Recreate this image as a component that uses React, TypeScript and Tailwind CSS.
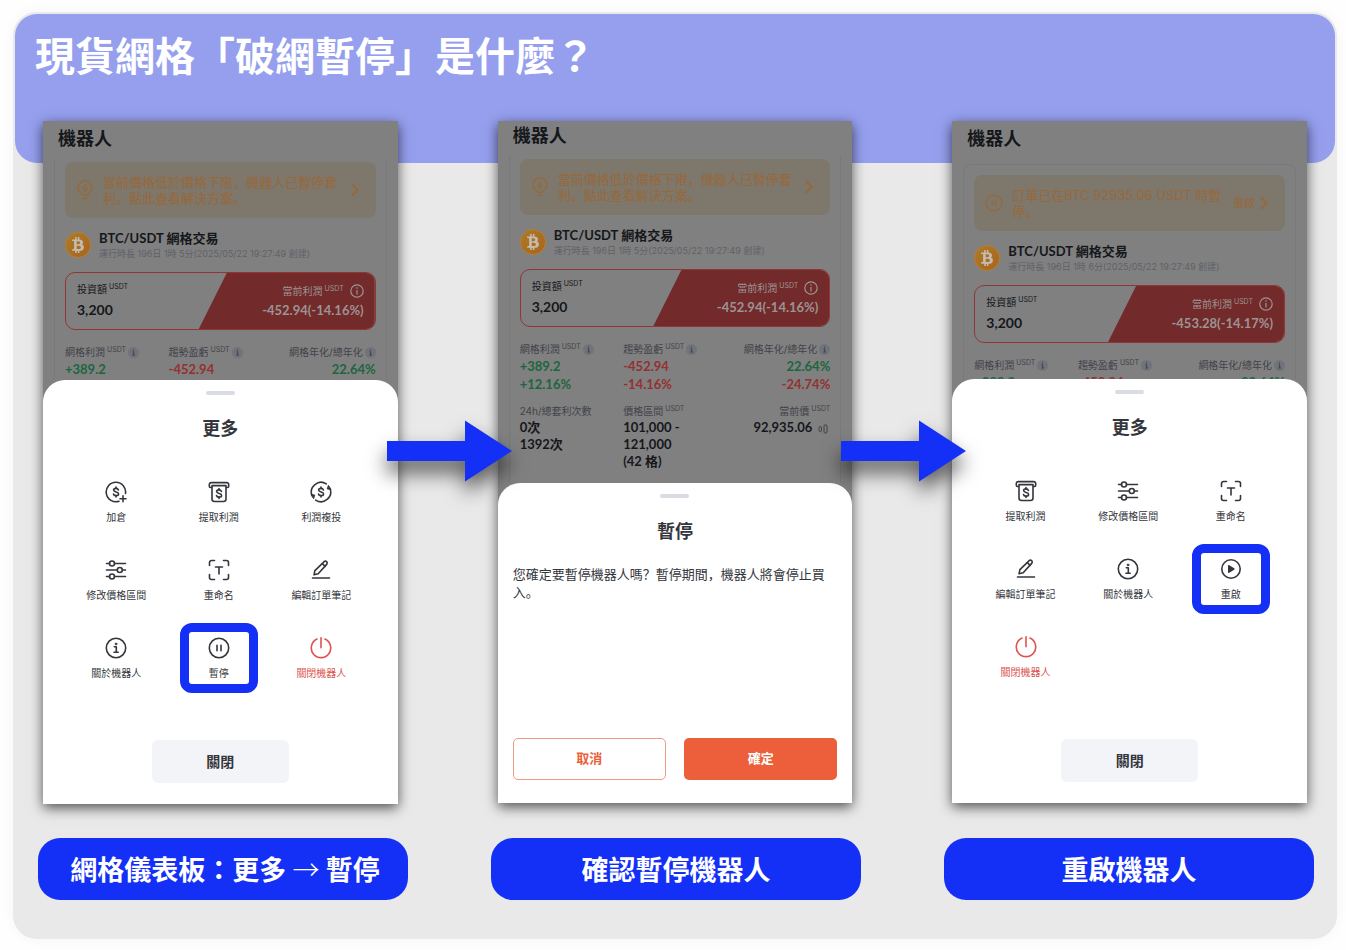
import React from 'react';
import { ChevronRight } from 'lucide-react';
import { FaBtc } from 'react-icons/fa';

type IconName =
  | 'add'
  | 'withdraw'
  | 'reinvest'
  | 'sliders'
  | 'rename'
  | 'edit'
  | 'info'
  | 'pause'
  | 'play'
  | 'power';

interface MenuItem {
  icon: IconName;
  label: string;
  danger?: boolean;
  highlighted?: boolean;
}

interface StatColumn {
  label: string;
  unit?: string;
  values: string[];
}

const dollar = (
  <>
    <path d="M13.4 8.9c-.3-.9-1.2-1.5-2.4-1.5-1.400 0-2.400.7-2.400 1.700 0 2.500 5 1.200 5 3.800 0 1-1.100 1.700-2.600 1.700-1.300 0-2.300-.6-2.500-1.600" />
    <path d="M11 6v1.400M11 14.600V16" />
  </>
);

const iconPaths: Record<IconName, React.ReactNode> = {
  add: (
    <>
      <path d="M20.500 12.500a9.700 9.700 0 1 0-6.500 7.700" />
      {dollar}
      <path d="M18 14.800v6M15 17.800h6" />
    </>
  ),
  withdraw: (
    <>
      <path d="M3.500 6.500H2.500A1.200 1.200 0 0 1 1.300 5.300V3.600A2 2 0 0 1 3.300 1.600h15.400a2 2 0 0 1 2 2v1.700a1.200 1.200 0 0 1-1.200 1.200h-1" />
      <path d="M4 4.600h14v13.400a2.500 2.500 0 0 1-2.500 2.500h-9A2.500 2.500 0 0 1 4 18z" />
      <g transform="translate(0 1.500)">{dollar}</g>
    </>
  ),
  reinvest: (
    <>
      <path d="M16.300 2.900A9.700 9.700 0 0 0 2 14.500M5.700 19.100A9.700 9.700 0 0 0 20 7.500" />
      <path d="M18.600 4.600l2.400 3.800-3.400-.4zM3.400 17.400L1 13.600l3.400.4z" fill="currentColor" strokeWidth="1" />
      {dollar}
    </>
  ),
  sliders: (
    <>
      <path d="M1.500 4.500h3M9.500 4.500h11M1.500 11h10.500M17.500 11h3M1.500 17.500h3M9.500 17.500h11" />
      <circle cx="7" cy="4.500" r="2.500" />
      <circle cx="14.800" cy="11" r="2.500" />
      <circle cx="7" cy="17.500" r="2.500" />
    </>
  ),
  rename: (
    <>
      <path d="M1.500 6.500v-3a2 2 0 0 1 2-2h3M15.500 1.500h3a2 2 0 0 1 2 2v3M20.500 15.500v3a2 2 0 0 1-2 2h-3M6.500 20.500h-3a2 2 0 0 1-2-2v-3" />
      <path d="M7.500 8h7M11 8v7" />
    </>
  ),
  edit: (
    <>
      <path d="M13.200 3.600l1-1.100a1.900 1.900 0 0 1 2.700 2.600L8.200 14.800l-4.200 1 .9-4.200z" />
      <path d="M12.300 4.700l2.900 2.600M2.500 19h17" />
    </>
  ),
  info: (
    <>
      <circle cx="11" cy="11" r="9.700" />
      <path d="M9.300 9.700h2v5.500M9 15.300h4.200" />
      <circle cx="11" cy="6.900" r="1" fill="currentColor" strokeWidth="0.600" />
    </>
  ),
  pause: (
    <>
      <circle cx="11" cy="11" r="9.700" />
      <path d="M9 8.200v5.600M13 8.200v5.600" />
    </>
  ),
  play: (
    <>
      <circle cx="11" cy="11" r="9.200" />
      <path d="M8.800 7.800v6.400l5-3.200z" fill="currentColor" />
    </>
  ),
  power: (
    <>
      <path d="M7 2.100a9.700 9.700 0 1 0 8 0" />
      <path d="M11 .8v10" />
    </>
  ),
};

function MenuIcon({ name, className }: { name: IconName; className: string }) {
  return (
    <svg
      viewBox="0 0 22 22"
      className={className}
      fill="none"
      stroke="currentColor"
      strokeWidth="1.600"
      strokeLinecap="round"
      strokeLinejoin="round"
      aria-hidden="true"
    >
      {iconPaths[name]}
    </svg>
  );
}

function BulbIcon() {
  return (
    <svg viewBox="0 0 16 20" className="h-5 w-4 shrink-0" fill="none" stroke="currentColor" strokeWidth="1.300" aria-hidden="true">
      <path d="M5.500 15.200C5.300 13.500 1 11.800 1 7.900a7 7 0 0 1 14 0c0 3.900-4.300 5.600-4.500 7.300z" strokeLinejoin="round" />
      <path d="M5.500 18.300h5" strokeWidth="1.600" />
      <path d="M8.800 4.800L5.800 8.500h4.400l-3 3.500" strokeLinejoin="round" />
    </svg>
  );
}

function Unit() {
  return <span className="pb-1 text-[7px] leading-[10px]">USDT</span>;
}

function InfoBadge() {
  return (
    <svg viewBox="0 0 11 11" className="h-[11px] w-[11px]" aria-hidden="true">
      <circle cx="5.500" cy="5.500" r="5.500" fill="#70737b" />
      <path d="M4.500 4.800h1.200v3M4.300 8h2.600M5.500 2.400v1.100" stroke="#3d3f46" strokeWidth="1" fill="none" />
    </svg>
  );
}

function CandleIcon() {
  return (
    <svg viewBox="0 0 10 10" className="mr-0.5 ml-1.5 inline h-2.5 w-2.5" fill="none" stroke="#404248" aria-hidden="true">
      <rect x="1" y="2.500" width="2.500" height="5" rx="1.200" />
      <rect x="6" y="1" width="3" height="8" rx="1" />
    </svg>
  );
}

function valueColor(value: string) {
  if (value.startsWith('-')) return 'text-[#943031]';
  if (value.startsWith('+') || value.endsWith('%')) return 'text-[#1c663f]';
  return 'text-[#15171b]';
}

const numberFont = "font-[Lato,'Noto_Sans_CJK_SC',sans-serif] font-bold";

function StatRow({ stats, badges, className }: { stats: StatColumn[]; badges?: boolean; className: string }) {
  return (
    <div className={`grid grid-cols-3 ${className}`}>
      {stats.map((stat, index) => (
        <div key={stat.label} className={index === 2 ? 'text-right' : ''}>
          <div
            className={`flex h-4 items-center gap-0.5 text-[10px] leading-4 whitespace-nowrap text-[#414349] ${
              index === 2 ? 'justify-end' : ''
            }`}
          >
            <span>{stat.label}</span>
            {stat.unit && <Unit />}
            {badges && <InfoBadge />}
          </div>
          {stat.values.map((value) => (
            <p
              key={value}
              className={`text-[13px] whitespace-nowrap ${numberFont} ${badges ? 'leading-[18px]' : 'leading-[17px]'} ${valueColor(value)}`}
            >
              {value}
              {value === '92,935.06' && <CandleIcon />}
            </p>
          ))}
        </div>
      ))}
    </div>
  );
}

const collapsedStats: StatColumn[] = [
  { label: '網格利潤', unit: 'USDT', values: ['+389.2'] },
  { label: '趨勢盈虧', unit: 'USDT', values: ['-452.94'] },
  { label: '網格年化/總年化', values: ['22.64%'] },
];

const expandedStats: StatColumn[] = [
  { label: '網格利潤', unit: 'USDT', values: ['+389.2', '+12.16%'] },
  { label: '趨勢盈虧', unit: 'USDT', values: ['-452.94', '-14.16%'] },
  { label: '網格年化/總年化', values: ['22.64%', '-24.74%'] },
];

const secondaryStats: StatColumn[] = [
  { label: '24h/總套利次數', values: ['0次', '1392次'] },
  { label: '價格區間', unit: 'USDT', values: ['101,000 -', '121,000', '(42 格)'] },
  { label: '當前價', unit: 'USDT', values: ['92,935.06'] },
];

interface DashboardProps {
  height: string;
  titleSpacing: string;
  cardStyle: string;
  notice: React.ReactNode;
  runtime: string;
  profit: string;
  expanded?: boolean;
}

function Dashboard({ height, titleSpacing, cardStyle, notice, runtime, profit, expanded }: DashboardProps) {
  return (
    <div className={`flex flex-col overflow-hidden px-[11px] ${height}`}>
      <h2 className={`pl-1 text-[18px] leading-7 font-bold text-[#15171b] ${titleSpacing}`}>機器人</h2>
      <div className={`flex-1 border-[#797979] px-2.5 ${cardStyle}`}>
        {notice}
        <div className="mt-[11px] flex h-8 items-center gap-2">
          <span className="flex h-[26px] w-[26px] items-center justify-center rounded-full border border-[#b5802c] bg-linear-to-br from-[#ad7a2a] to-[#a8641a] text-[#c4bcb0]">
            <FaBtc className="h-4 w-4" aria-hidden="true" />
          </span>
          <div className="whitespace-nowrap">
            <h3 className={`text-[13px] leading-[18px] text-[#15171b] ${numberFont}`}>BTC/USDT 網格交易</h3>
            <p className="text-[9px] leading-[14px] text-[#5f6168]">{runtime}</p>
          </div>
        </div>
        <div className="mt-[11px] flex h-[58px] justify-between overflow-hidden rounded-[10px] border border-[#923536]">
          <div className="pt-2 pl-[11px] text-[#15171b]">
            <div className="flex h-4 items-center gap-0.5 text-[10px] leading-4">
              <span>投資額</span>
              <Unit />
            </div>
            <p className={`mt-1 text-[14px] leading-[18px] ${numberFont}`}>3,200</p>
          </div>
          <div className="w-[57%] bg-[#722a2a] pt-2.5 pr-[11px] text-right text-[#9c9494] [clip-path:polygon(28px_0,100%_0,100%_100%,0_100%)]">
            <div className="flex h-4 items-center justify-end gap-0.5 text-[10px] leading-4">
              <span>當前利潤</span>
              <Unit />
              <svg viewBox="0 0 14 14" className="ml-1 h-3.5 w-3.5" fill="none" stroke="currentColor" strokeWidth="1.200" aria-hidden="true">
                <circle cx="7" cy="7" r="6.200" />
                <path d="M7 6v4.500M7 3.300v1.400" />
              </svg>
            </div>
            <p className={`mt-0.5 text-[13px] leading-[18px] ${numberFont}`}>{profit}</p>
          </div>
        </div>
        <StatRow stats={expanded ? expandedStats : collapsedStats} badges className="mt-3.5" />
        {expanded && <StatRow stats={secondaryStats} className="mt-2.5" />}
      </div>
    </div>
  );
}

function PriceNotice() {
  return (
    <button type="button" className="flex h-14 w-full items-center rounded-lg bg-[#7e776b] pr-2.5 pl-3 text-left text-[#97683a]">
      <BulbIcon />
      <span className="ml-2.5 flex-1 text-[13px] leading-4">當前價格低於價格下限，機器人已暫停套利。點此查看解決方案。</span>
      <ChevronRight className="h-[22px] w-[22px] shrink-0" strokeWidth={2} />
    </button>
  );
}

function PausedNotice() {
  return (
    <button type="button" className="flex h-14 w-full items-center rounded-lg bg-[#7e776b] pr-2.5 pl-[11px] text-left text-[#97683a]">
      <MenuIcon name="pause" className="h-[18px] w-[18px] shrink-0" />
      <span className="ml-[9px] flex-1 text-[13px] leading-4">訂單已在BTC 92935.06 USDT 時暫停。</span>
      <span className="shrink-0 text-[11px]">重啟</span>
      <ChevronRight className="-ml-0.5 h-[22px] w-[22px] shrink-0" strokeWidth={2} />
    </button>
  );
}

function Sheet({ title, children }: { title: string; children: React.ReactNode }) {
  return (
    <section className="flex flex-1 flex-col rounded-t-[22px] bg-white pt-[11px] text-[#34363c]">
      <div className="mx-auto h-1 w-[29px] rounded-full bg-[#d9dce3]" />
      <h2 className="mt-5 text-center text-[18px] leading-7 font-bold">{title}</h2>
      {children}
    </section>
  );
}

function MoreSheet({ items }: { items: MenuItem[] }) {
  return (
    <Sheet title="更多">
      <div className="mt-[38px] grid grid-cols-3 grid-rows-[repeat(3,44px)] gap-y-[34px] pr-[25px] pl-[22px]">
        {items.map((item) => (
          <button
            type="button"
            key={item.label}
            className={`relative flex flex-col items-center gap-1.5 text-[10px] leading-4 whitespace-nowrap ${
              item.danger ? 'text-[#dd5350]' : ''
            }`}
          >
            <MenuIcon name={item.icon} className="h-[22px] w-[22px]" />
            {item.label}
            {item.highlighted && (
              <span className="absolute -top-3.5 -bottom-3 left-1/2 w-[78px] -translate-x-1/2 rounded-xl border-[9px] border-[#1430f7]" />
            )}
          </button>
        ))}
      </div>
      <button type="button" className="mx-auto mt-[59px] mb-[21px] h-[43px] w-[137px] rounded-md bg-[#f3f4f8] text-[14px] font-bold">
        關閉
      </button>
    </Sheet>
  );
}

function PauseSheet() {
  return (
    <Sheet title="暫停">
      <p className="mt-[19px] px-[15px] text-[13px] leading-[18px]">您確定要暫停機器人嗎？暫停期間，機器人將會停止買入。</p>
      <div className="mt-auto grid grid-cols-2 gap-[18px] px-[15px] pt-[137px] pb-[23px] text-[13px] font-bold">
        <button type="button" className="h-[42px] rounded-[5px] border border-[#f09a80] text-[#ec5f3a]">
          取消
        </button>
        <button type="button" className="h-[42px] rounded-[5px] bg-[#ec5f3a] text-white">
          確定
        </button>
      </div>
    </Sheet>
  );
}

function FlowArrow() {
  return (
    <svg
      viewBox="0 0 125 62"
      className="absolute top-[299px] left-full z-10 -ml-[11px] h-[62px] w-[125px] drop-shadow-[0_12px_10px_rgba(0,0,0,0.6)]"
      fill="#1430f7"
      aria-hidden="true"
    >
      <path d="M0 21h78V0.500L125 31 78 61.500V41H0z" />
    </svg>
  );
}

function Phone({ children, arrow }: { children: React.ReactNode; arrow?: boolean }) {
  return (
    <article className="relative flex flex-col bg-[#808080] font-[Inter,'Noto_Sans_CJK_SC',sans-serif] shadow-[0_4px_12px_rgba(0,0,0,0.65)]">
      {children}
      {arrow && <FlowArrow />}
    </article>
  );
}

const runningMenu: MenuItem[] = [
  { icon: 'add', label: '加倉' },
  { icon: 'withdraw', label: '提取利潤' },
  { icon: 'reinvest', label: '利潤複投' },
  { icon: 'sliders', label: '修改價格區間' },
  { icon: 'rename', label: '重命名' },
  { icon: 'edit', label: '編輯訂單筆記' },
  { icon: 'info', label: '關於機器人' },
  { icon: 'pause', label: '暫停', highlighted: true },
  { icon: 'power', label: '關閉機器人', danger: true },
];

const pausedMenu: MenuItem[] = [
  { icon: 'withdraw', label: '提取利潤' },
  { icon: 'sliders', label: '修改價格區間' },
  { icon: 'rename', label: '重命名' },
  { icon: 'edit', label: '編輯訂單筆記' },
  { icon: 'info', label: '關於機器人' },
  { icon: 'play', label: '重啟', highlighted: true },
  { icon: 'power', label: '關閉機器人', danger: true },
];

const captionClass = 'flex h-[62px] items-center justify-center rounded-[22px] bg-[#1430f7] whitespace-pre';

export default function App() {
  return (
    <div className="bg-[#fefefe] pt-3 pr-[9px] pb-[11px] pl-[13px] font-['Noto_Sans_CJK_TC',sans-serif]">
      <main className="rounded-[24px] bg-[#e9e9e9] p-0.5 pb-[39px] shadow-[0_0_14px_rgba(0,0,0,0.04)]">
        <header className="h-[149px] rounded-[22px] bg-[#959fee] px-5 pt-2.5">
          <h1 className="text-[40px] leading-[60px] font-bold text-white">現貨網格「破網暫停」是什麼？</h1>
        </header>
        <div className="-mt-[42px] grid grid-cols-3 items-start gap-[100px] px-7">
          <Phone arrow>
            <Dashboard
              height="h-[259px]"
              titleSpacing="mt-1"
              cardStyle="mt-1.5 border-x pt-[3px]"
              notice={<PriceNotice />}
              runtime="運行時長 196日 1時 5分(2025/05/22 19:27:49 創建)"
              profit="-452.94(-14.16%)"
            />
            <MoreSheet items={runningMenu} />
          </Phone>
          <Phone arrow>
            <Dashboard
              height="h-[362px]"
              titleSpacing="mt-px"
              cardStyle="mt-1.5 border-x pt-[3px]"
              notice={<PriceNotice />}
              runtime="運行時長 196日 1時 5分(2025/05/22 19:27:49 創建)"
              profit="-452.94(-14.16%)"
              expanded
            />
            <PauseSheet />
          </Phone>
          <Phone>
            <Dashboard
              height="h-[258px]"
              titleSpacing="mt-1"
              cardStyle="mt-[11px] rounded-t-lg border-x border-t pt-2.5"
              notice={<PausedNotice />}
              runtime="運行時長 196日 1時 6分(2025/05/22 19:27:49 創建)"
              profit="-453.28(-14.17%)"
            />
            <MoreSheet items={pausedMenu} />
          </Phone>
        </div>
        <div className="mt-[34px] grid grid-cols-3 gap-[83px] pr-[21px] pl-[23px] text-[27px] font-bold text-white">
          <p className={`pl-1 ${captionClass}`}>
            網格儀表板：更多 <span className="font-light">→</span> 暫停
          </p>
          <p className={captionClass}>確認暫停機器人</p>
          <p className={captionClass}>重啟機器人</p>
        </div>
      </main>
    </div>
  );
}
